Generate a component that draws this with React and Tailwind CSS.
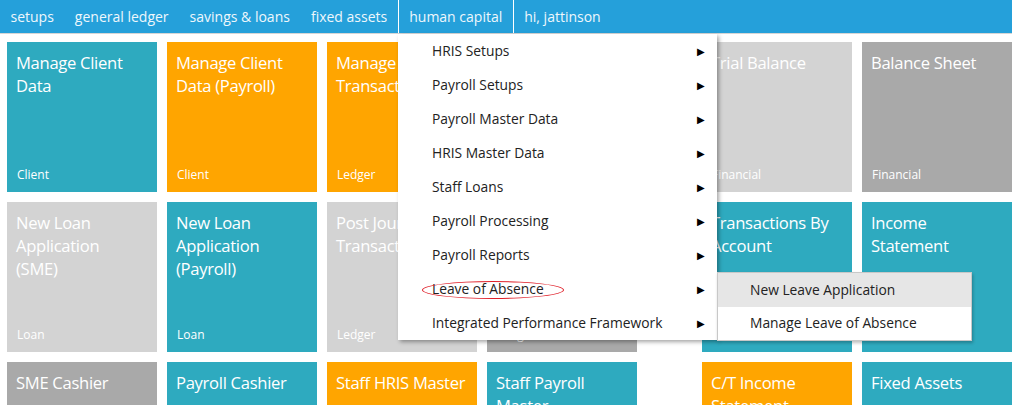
const navItems = ['setups', 'general ledger', 'savings & loans', 'fixed assets', 'human capital', 'hi, jattinson'];

const colors = {
  teal: 'bg-[#2eaabf]',
  orange: 'bg-[#ffa500]',
  light: 'bg-[#d3d3d3]',
  dark: 'bg-[#a9a9a9]',
};

// titles keep the line breaks seen on the live page
const leftTiles = [
  { title: 'Manage Client\nData', tag: 'Client', color: 'teal' },
  { title: 'Manage Client\nData (Payroll)', tag: 'Client', color: 'orange' },
  { title: 'Manage\nTransactions', tag: 'Ledger', color: 'orange' },
  { title: 'Journal Entries', tag: 'Ledger', color: 'teal' },
  { title: 'New Loan\nApplication\n(SME)', tag: 'Loan', color: 'light' },
  { title: 'New Loan\nApplication\n(Payroll)', tag: 'Loan', color: 'teal' },
  { title: 'Post Journal\nTransactions', tag: 'Ledger', color: 'light' },
  { title: 'Reports', tag: 'Ledger', color: 'dark' },
  { title: 'SME Cashier', tag: 'Loan', color: 'dark' },
  { title: 'Payroll Cashier', tag: 'Loan', color: 'teal' },
  { title: 'Staff HRIS Master', tag: 'HR', color: 'orange' },
  { title: 'Staff Payroll\nMaster', tag: 'HR', color: 'teal' },
];

const rightTiles = [
  { title: 'Trial Balance', tag: 'Financial', color: 'light' },
  { title: 'Balance Sheet', tag: 'Financial', color: 'dark' },
  { title: 'Transactions By\nAccount', tag: 'Financial', color: 'teal' },
  { title: 'Income\nStatement', tag: 'Financial', color: 'teal' },
  { title: 'C/T Income\nStatement', tag: 'Financial', color: 'orange' },
  { title: 'Fixed Assets', tag: 'Assets', color: 'teal' },
];

const menuItems = [
  'HRIS Setups',
  'Payroll Setups',
  'Payroll Master Data',
  'HRIS Master Data',
  'Staff Loans',
  'Payroll Processing',
  'Payroll Reports',
  'Leave of Absence',
  'Integrated Performance Framework',
];

function Tile({ title, tag, color }) {
  return (
    <div className={`w-[150px] h-[150px] ${colors[color]} text-white flex flex-col justify-between px-[9px] pt-[9px] pb-[9px]`}>
      <p className="text-[16.6px] leading-[23px] tracking-[-0.3px] whitespace-pre-line">{title}</p>
      <p className="text-[12px] leading-4 pl-px">{tag}</p>
    </div>
  );
}

export default function App() {
  return (
    <div className="relative w-[1012px] h-[405px] overflow-hidden bg-white font-['Open_Sans',sans-serif]">
      {/* top nav */}
      <div className="h-[33px] bg-[#25a0da] border-b border-[#d6d6d6] flex items-stretch box-content">
        {navItems.map((n) => (
          <div
            key={n}
            className={`px-[10.5px] flex items-center text-[14px] text-[#eef7fc] ${n === 'human capital' ? 'border-x border-white' : ''}`}
          >
            {n}
          </div>
        ))}
      </div>

      {/* tiles */}
      <div className="flex gap-[65px] pl-[7px] pt-[8px]">
        <div className="grid grid-cols-[repeat(4,150px)] gap-[10px] shrink-0">
          {leftTiles.map((t) => <Tile key={t.title} {...t} />)}
        </div>
        <div className="grid grid-cols-[repeat(2,150px)] gap-[10px] shrink-0">
          {rightTiles.map((t) => <Tile key={t.title} {...t} />)}
        </div>
      </div>

      {/* dropdown */}
      <div className="absolute left-[398px] top-[34px] w-[319px] bg-white shadow-[2px_2px_4px_rgba(0,0,0,0.35)] text-[13.8px] text-[#222]">
        {menuItems.map((m) => (
          <div key={m} className="h-[34px] flex items-center pl-[34px] pr-[12px]">
            <span className="flex-1">{m}</span>
            <span className="text-[10px] text-black">▶</span>
          </div>
        ))}
      </div>

      {/* annotation ellipse */}
      <div className="absolute left-[422px] top-[281px] w-[142px] h-[18px] rounded-[50%] border border-[#e0202a]" />

      {/* submenu */}
      <div className="absolute left-[717px] top-[272px] w-[255px] bg-white border border-[#c8c8c8] shadow-[1px_2px_3px_rgba(0,0,0,0.25)] text-[13.8px] text-[#222]">
        <div className="h-[34px] flex items-center pl-[32px] bg-[#e6e6e6]">New Leave Application</div>
        <div className="h-[33px] flex items-center pl-[32px]">Manage Leave of Absence</div>
      </div>
    </div>
  );
}
